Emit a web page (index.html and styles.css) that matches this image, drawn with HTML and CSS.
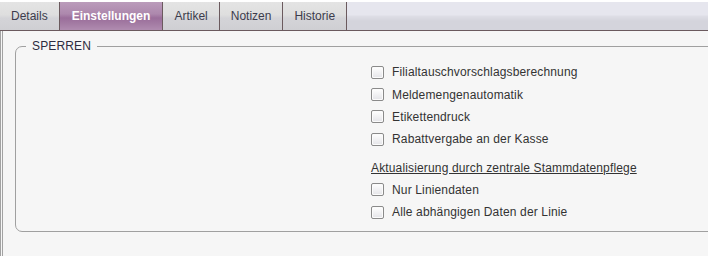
FILE: index.html
```html
<!DOCTYPE html>
<html>
<head>
    <meta charset="UTF-8">
    <title>Einstellungen</title>
    <link rel="stylesheet" href="styles.css">
</head>
<body>
<div class="page">
    <ul class="tabs">
        <li class="tab">Details</li>
        <li class="tab active">Einstellungen</li>
        <li class="tab">Artikel</li>
        <li class="tab">Notizen</li>
        <li class="tab">Historie</li>
    </ul>

    <div class="content">
        <fieldset class="box">
            <legend>SPERREN</legend>
            <div class="options">
                <label class="row"><span class="check"></span>Filialtauschvorschlagsberechnung</label>
                <label class="row"><span class="check"></span>Meldemengenautomatik</label>
                <label class="row"><span class="check"></span>Etikettendruck</label>
                <label class="row"><span class="check"></span>Rabattvergabe an der Kasse</label>

                <div class="heading">Aktualisierung durch zentrale Stammdatenpflege</div>

                <label class="row"><span class="check"></span>Nur Liniendaten</label>
                <label class="row"><span class="check"></span>Alle abhängigen Daten der Linie</label>
            </div>
        </fieldset>
    </div>
</div>
</body>
</html>
```

FILE: styles.css
```css
* {
    margin: 0;
    padding: 0;
    font-family: "Liberation Sans", Arial, sans-serif;
    font-size: 12px;
    letter-spacing: 0.15px;
    color: #333;
}

html, body {
    height: 100%;
}

body {
    background: #fff;
    overflow: hidden;
}

.page {
    padding-top: 2px;
    height: 100%;
    box-sizing: border-box;
}

/*tab bar*/
.tabs {
    display: flex;
    list-style: none;
    height: 28px;
    border-bottom: 1px solid #6b5a5e;
    background: linear-gradient(#e6e6ee 0, #e6e6ee 13px, #dedee6 14px, #d4d4dc 19px, #d4d4dc 100%);
}

.tab {
    padding: 0 11px;
    line-height: 28px;
    letter-spacing: 0;
    color: #3c3c4c;
    border-right: 1px solid #6b5a5e;
    background: linear-gradient(#e4e4e4 0, #dedede 13px, #d4d4d8 16px, #cfcfd3 100%);
}

.tab.active {
    padding: 0 12px;
    font-weight: bold;
    color: #fff;
    background: linear-gradient(#bb9cbb 0, #ad88ad 12px, #9b6e9b 16px, #a47ca4 22px, #b08cb0 100%);
}

/*content*/
.content {
    height: calc(100% - 29px);
    background: #f6f6f6;
    border-left: 3px double #a2a2a2;
    box-sizing: border-box;
    overflow: hidden;
    padding-top: 8px;
}

.box {
    margin: 0 -40px 0 12px;
    padding: 8px 0 8px 10px;
    border: 1px solid #a0a0a0;
    border-radius: 7px;
}

.box legend {
    padding: 0 6px;
    line-height: 14px;
    color: #2c2c40;
}

.options {
    margin-left: 345px;
}

.row {
    display: flex;
    align-items: center;
    height: 22.4px;
    color: #333;
}

.check {
    width: 11px;
    height: 11px;
    margin-right: 8px;
    border: 1px solid #8a8a8a;
    border-radius: 2px;
    background: linear-gradient(#ffffff, #e4e4e8);
    box-shadow: inset 0 0 0 1px #fbfbfb;
}

.heading {
    margin-top: 6px;
    line-height: 22px;
    text-decoration: underline;
    color: #333;
}
```
